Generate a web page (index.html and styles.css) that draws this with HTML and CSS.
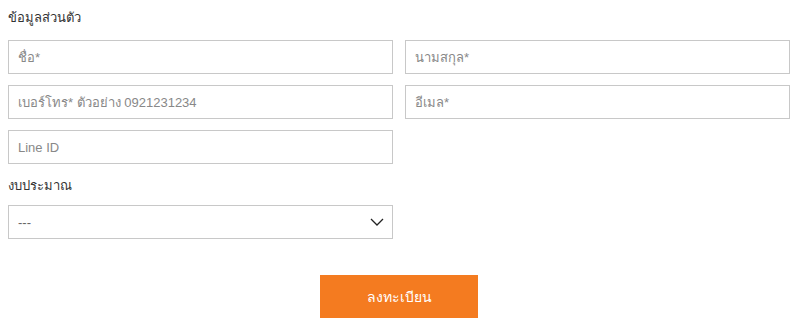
FILE: index.html
```html
<!DOCTYPE html>
<html lang="th">
<head>
    <meta charset="UTF-8">
    <meta name="viewport" content="width=device-width, initial-scale=1.0">
    <title>ลงทะเบียน</title>
    <link rel="stylesheet" href="styles.css">
</head>
<body>
    <form class="register">
        <h3 class="section-title">ข้อมูลส่วนตัว</h3>

        <div class="fields">
            <input type="text" class="field" placeholder="ชื่อ*">
            <input type="text" class="field" placeholder="นามสกุล*">
            <input type="text" class="field" placeholder="เบอร์โทร* ตัวอย่าง 0921231234">
            <input type="email" class="field" placeholder="อีเมล*">
            <input type="text" class="field" placeholder="Line ID">
        </div>

        <label class="section-title budget-label" for="budget">งบประมาณ</label>
        <div class="fields">
            <div class="select-wrap">
                <select id="budget" class="field select">
                    <option>---</option>
                </select>
                <svg class="chevron" width="14" height="8" viewBox="0 0 14 8">
                    <path d="M1 1l6 6 6-6" fill="none" stroke="#222" stroke-width="1.3"/>
                </svg>
            </div>
        </div>

        <div class="actions">
            <button type="button" class="submit">ลงทะเบียน</button>
        </div>
    </form>
</body>
</html>
```

FILE: styles.css
```css
body {
    margin: 8px;
    font-family: "Liberation Sans", "Noto Sans", sans-serif;
    color: #333;
    background-color: #fff;
}
.register {
    width: 782px;
}
.section-title {
    display: block;
    margin: 0 0 12px;
    font-size: 13px;
    font-weight: normal;
    line-height: 20px;
    color: #333;
}
.fields {
    display: grid;
    grid-template-columns: 385px 385px;
    column-gap: 12px;
    row-gap: 11px;
}
.field {
    box-sizing: border-box;
    width: 100%;
    height: 34px;
    padding: 0 9px;
    border: 1px solid #c8c8c8;
    border-radius: 0;
    font-family: inherit;
    font-size: 13px;
    color: #555;
    background-color: #fff;
    outline: none;
}
.field::placeholder {
    color: #888;
}
.budget-label {
    margin-top: 12px;
    margin-bottom: 9px;
}
.select-wrap {
    position: relative;
}
.select {
    appearance: none;
    -webkit-appearance: none;
    color: #666;
}
.chevron {
    position: absolute;
    right: 9px;
    top: 13px;
    pointer-events: none;
}
.actions {
    display: flex;
    justify-content: center;
    margin-top: 36px;
}
.submit {
    width: 158px;
    height: 43px;
    border: none;
    background-color: #f47b20;
    color: #fff;
    font-family: inherit;
    font-size: 14px;
    cursor: pointer;
}
```
